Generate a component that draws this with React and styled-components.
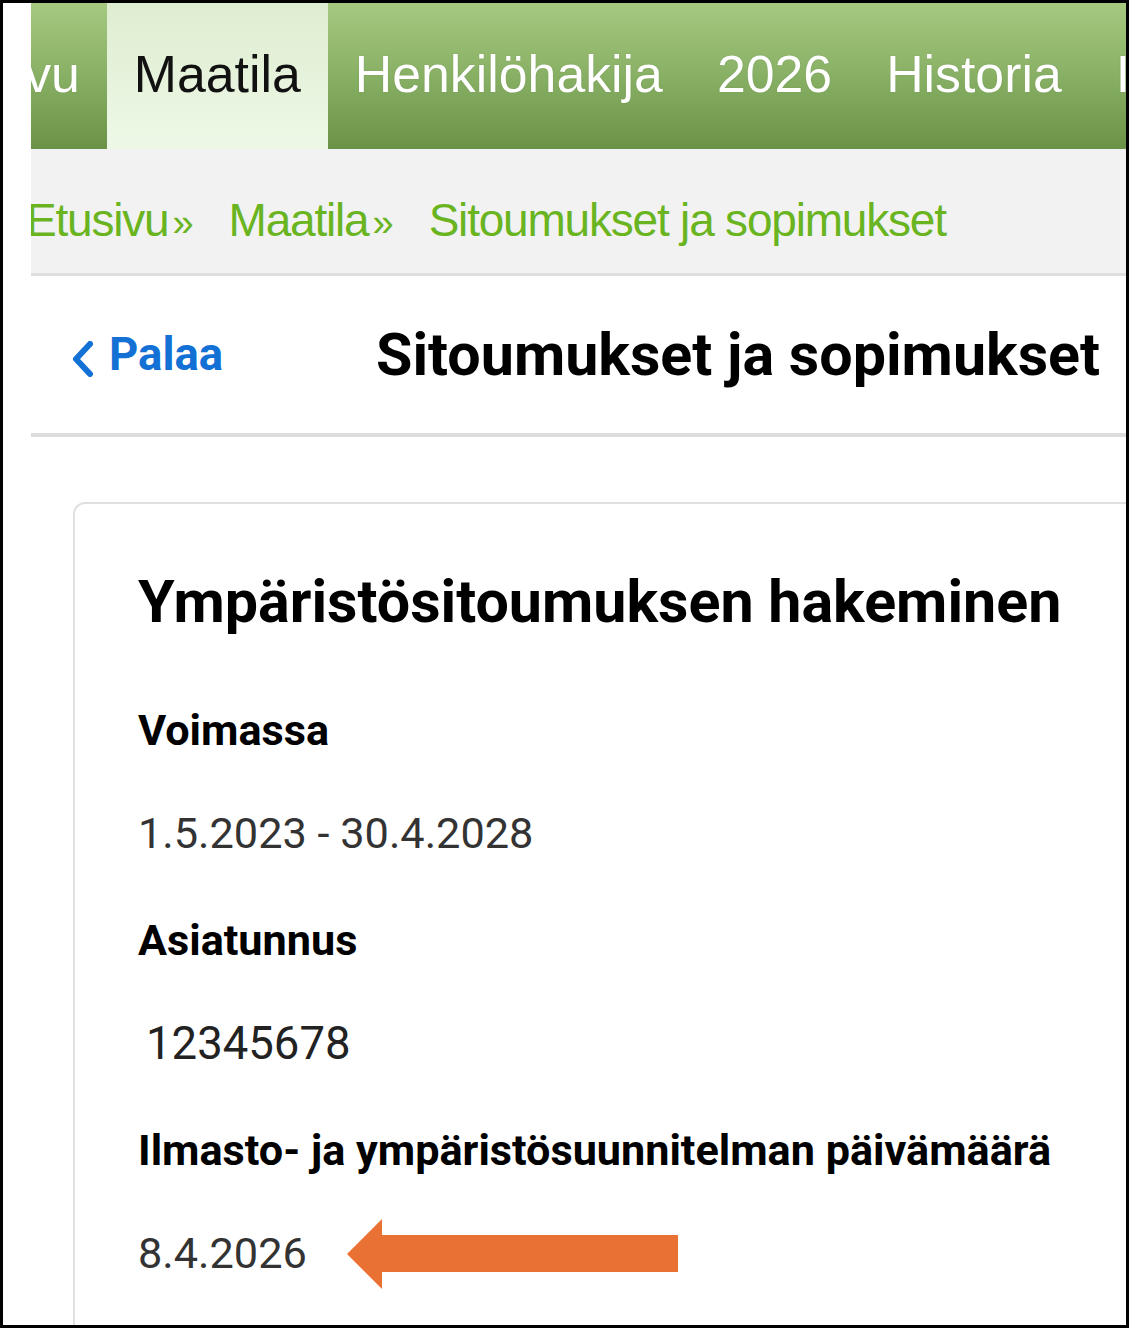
import React from 'react'
import styled, { createGlobalStyle } from 'styled-components'

const GlobalStyle = createGlobalStyle`
  html, body {
    margin: 0;
    padding: 0;
    background: #fff;
  }
  * {
    box-sizing: border-box;
  }
`

const Frame = styled.div`
  width: 1129px;
  height: 1328px;
  border: 3px solid #000;
  background: #fff;
  padding-left: 28px;
  overflow: hidden;
`

const Page = styled.div`
  width: 100%;
  height: 100%;
  overflow: hidden;
  font-family: Roboto, "Liberation Sans", Arial, sans-serif;
`

const NavBar = styled.nav`
  height: 146px;
  background: linear-gradient(to bottom, #a6c980 0%, #88b064 50%, #6a9347 100%);
  overflow: hidden;
`

const NavList = styled.ul`
  display: flex;
  height: 100%;
  margin: 0 0 0 -148px;
  padding: 0;
  list-style: none;
  white-space: nowrap;
`

const NavTab = styled.li`
  display: flex;
  flex-shrink: 0;
  align-items: center;
  padding: 0 27px 4px;
  font-family: "Liberation Sans", Arial, sans-serif;
  font-size: 51.8px;
  color: ${p => (p.$active ? '#111' : '#fff')};
  background: ${p => (p.$active ? 'linear-gradient(to bottom, #deedd0, #eef8e7)' : 'transparent')};
  text-shadow: ${p => (p.$active ? 'none' : '0 0 1px rgba(40, 70, 20, 0.35)')};
`

const Crumbs = styled.div`
  display: flex;
  align-items: center;
  height: 127px;
  padding: 18px 0 0 0;
  background: #f2f2f2;
  border-bottom: 3px solid #dedede;
  white-space: nowrap;
  overflow: hidden;
`

const Crumb = styled.a`
  margin-left: ${p => (p.$first ? '-5px' : '0')};
  margin-right: 35px;
  font-family: "Liberation Sans", Arial, sans-serif;
  font-size: 46px;
  letter-spacing: -1.2px;
  color: #69b41f;
  text-decoration: none;
`

const Sep = styled.span`
  margin-left: 4px;
  font-size: 38px;
  letter-spacing: 0;
`

const TitleRow = styled.div`
  display: flex;
  align-items: center;
  height: 161px;
  padding-left: 41px;
  border-bottom: 4px solid #dcdcdc;
`

const BackLink = styled.a`
  display: flex;
  align-items: center;
  gap: 15px;
  width: 304px;
  font-size: 45.5px;
  font-weight: 700;
  color: #1370d4;
  text-decoration: none;
  svg {
    margin-top: 8px;
  }
`

const Title = styled.h1`
  margin: 0;
  font-size: 59.2px;
  font-weight: 700;
  color: #000;
  white-space: nowrap;
`

const Card = styled.section`
  margin: 65px -80px 0 42px;
  min-height: 900px;
  padding: 62px 0 0 63px;
  border: 2px solid #e0e0e0;
  border-radius: 12px;
`

const Heading = styled.h2`
  margin: 0 0 68px;
  font-size: 59.2px;
  font-weight: 700;
  line-height: 72px;
  color: #000;
  white-space: nowrap;
`

const Field = styled.div`
  display: flex;
  flex-direction: column;
  gap: 53px;
  margin-bottom: 57px;
`

const Label = styled.div`
  font-size: 43.2px;
  font-weight: 700;
  line-height: 50px;
  color: #000;
  white-space: nowrap;
`

const ValueRow = styled.div`
  display: flex;
  align-items: center;
  height: 50px;
  gap: 40px;
`

const Value = styled.div`
  font-size: ${p => (p.$large ? '45.5px' : '43.3px')};
  line-height: 50px;
  color: ${p => (p.$large ? '#222' : '#333')};
  padding-left: ${p => (p.$large ? '8px' : '0')};
  white-space: nowrap;
`

const Chevron = () => (
  <svg width="22" height="36" viewBox="0 0 22 36">
    <polyline points="18,3 4,18 18,33" fill="none" stroke="#1370d4" strokeWidth="6" strokeLinecap="round" strokeLinejoin="round" />
  </svg>
)

const Arrow = () => (
  <svg width="332" height="70" viewBox="0 0 332 70">
    <polygon points="0,35 35,0 35,16 331,16 331,53 35,53 35,70" fill="#e87133" />
  </svg>
)

const tabs = ['Etusivu', 'Maatila', 'Henkilöhakija', '2026', 'Historia', 'Ilmoitukset']
const crumbs = ['Etusivu', 'Maatila', 'Sitoumukset ja sopimukset']

const fields = [
  { label: 'Voimassa', value: '1.5.2023 - 30.4.2028' },
  { label: 'Asiatunnus', value: '12345678', large: true },
  { label: 'Ilmasto- ja ympäristösuunnitelman päivämäärä', value: '8.4.2026', marked: true },
]

export default function App() {
  return (
    <>
      <GlobalStyle />
      <Frame>
        <Page>
          <NavBar>
            <NavList>
              {tabs.map(t => (
                <NavTab key={t} $active={t === 'Maatila'}>{t}</NavTab>
              ))}
            </NavList>
          </NavBar>
          <Crumbs>
            {crumbs.map((c, i) => (
              <Crumb key={c} href="#" $first={i === 0}>
                {c}
                {i < crumbs.length - 1 && <Sep>»</Sep>}
              </Crumb>
            ))}
          </Crumbs>
          <TitleRow>
            <BackLink href="#">
              <Chevron />
              Palaa
            </BackLink>
            <Title>Sitoumukset ja sopimukset</Title>
          </TitleRow>
          <Card>
            <Heading>Ympäristösitoumuksen hakeminen</Heading>
            {fields.map(f => (
              <Field key={f.label}>
                <Label>{f.label}</Label>
                <ValueRow>
                  <Value $large={f.large}>{f.value}</Value>
                  {f.marked && <Arrow />}
                </ValueRow>
              </Field>
            ))}
          </Card>
        </Page>
      </Frame>
    </>
  )
}
